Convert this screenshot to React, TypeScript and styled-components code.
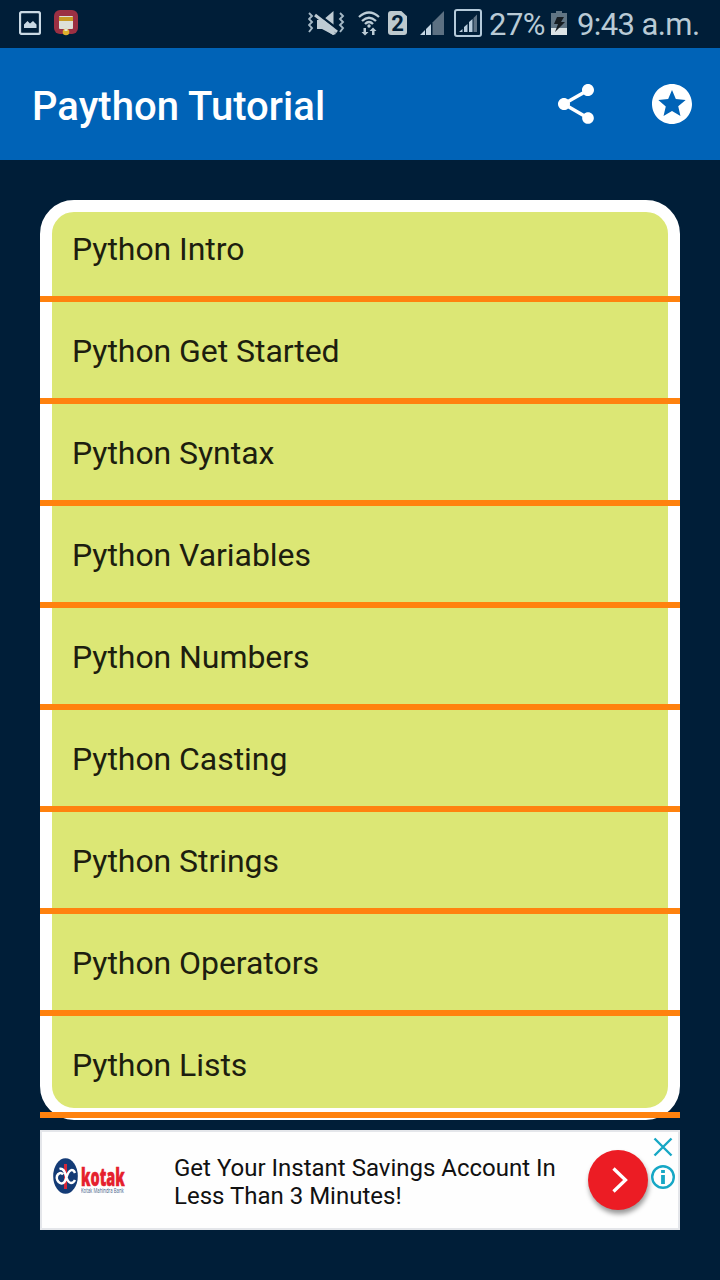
import styled, { createGlobalStyle } from "styled-components";

const lessons = [
    "Python Intro",
    "Python Get Started",
    "Python Syntax",
    "Python Variables",
    "Python Numbers",
    "Python Casting",
    "Python Strings",
    "Python Operators",
    "Python Lists",
];

const App = () => {
    return (
        <>
            <GlobalStyle />
            <ScreenStyled>
                <StatusBar />
                <HeaderStyled>
                    <TitleStyled>Paython Tutorial</TitleStyled>
                    <IconButtonStyled aria-label="Share"><ShareIcon /></IconButtonStyled>
                    <IconButtonStyled aria-label="Rate"><StarsIcon /></IconButtonStyled>
                </HeaderStyled>
                <CardStyled>
                    <LessonListStyled>
                        {lessons.map((lesson) => <LessonStyled key={lesson}>{lesson}</LessonStyled>)}
                    </LessonListStyled>
                </CardStyled>
                <AdBanner />
            </ScreenStyled>
        </>
    )
}

const StatusBar = () => (
    <StatusBarStyled>
        <StatusIcon $width={22} $height={24} $left={19} viewBox="0 0 22 24">
            <rect x="1" y="1" width="20" height="22" rx="2" fill="none" stroke="#c9d9e4" strokeWidth="2.300" />
            <path d="M5 17v-3.500L8.500 10l2.500 2.500 3-2.500 3.500 3.500V17z" fill="#c9d9e4" />
        </StatusIcon>
        <StatusIcon $width={24} $height={26} $left={13} viewBox="0 0 24 26">
            <rect width="24" height="24" rx="6" fill="#9b3043" />
            <rect x="5" y="6" width="14" height="13" rx="1" fill="#dde0d8" />
            <path d="M5 7h14v4H5z" fill="#c79a25" />
            <circle cx="12" cy="22" r="3.300" fill="#dfb12d" />
            <path d="M10.500 19h3v2h-3z" fill="#e7e4d0" />
        </StatusIcon>
        <StatusIcon $width={37} $height={25} $left={230} viewBox="0 0 37 25">
            <path d="M9 9h6l10.500-9v24L14 18H9z" fill="#becbd3" />
            <path d="M8 1.500L30 18.500" stroke="#001e38" strokeWidth="2.500" />
            <path d="M7 4L29 21" stroke="#becbd3" strokeWidth="3" />
            <path d="M16 15h6l6 8-3 1-9-6z" fill="#becbd3" />
            <path d="M1 2l3 3-3 3 3 3-3 3 3 3-3 4M32 2l3 3-3 3 3 3-3 3 3 3-3 4" fill="none" stroke="#a4b8c5" strokeWidth="1.900" />
        </StatusIcon>
        <StatusIcon $width={22} $height={25} $left={13} viewBox="0 0 22 25">
            <path d="M1 6Q11-3 21 6M4 10Q11 3.500 18 10M7 13Q11 9 15 13" fill="none" stroke="#bcccd6" strokeWidth="2.300" />
            <circle cx="11" cy="15" r="1.700" fill="#bcccd6" />
            <path d="M5.500 17h2.500v4h2.500L7 24.500 3.500 21h2zM14 24h2.500v-4h2L15 16.500 11.500 20H14z" fill="#bcccd6" />
        </StatusIcon>
        <SimStyled>2</SimStyled>
        <StatusIcon $width={24} $height={24} $left={13} viewBox="0 0 24 24">
            <path d="M0 24l5-5v5zM6 18l5-5v11H6z" fill="#c3d5e3" />
            <path d="M12.500 11.500L24 0v24H12.500z" fill="#5c7082" />
        </StatusIcon>
        <StatusIcon $width={28} $height={28} $left={10} viewBox="0 0 28 28">
            <rect x="1" y="1" width="26" height="26" rx="2" fill="none" stroke="#b4cada" strokeWidth="2" />
            <path d="M5 23l3.500-3v3zM10 18l3.500-3v8H10zM15 13l3.500-3v13H15z" fill="#b9cddd" />
            <path d="M19.500 9L23 5.500V23h-3.500z" fill="#607486" />
        </StatusIcon>
        <BatteryTextStyled>27%</BatteryTextStyled>
        <StatusIcon $width={16} $height={24} $left={6} viewBox="0 0 16 24">
            <path d="M5 0h6v2h5v22H0V2h5z" fill="#617584" />
            <path d="M0 17h16v7H0z" fill="#dce3e6" />
            <path d="M6 6h7l-3 5h4L4 21l3-8H3z" fill="#171d22" />
        </StatusIcon>
        <ClockStyled>9:43 a.m.</ClockStyled>
    </StatusBarStyled>
)

const ShareIcon = () => (
    <svg width="48" height="48" viewBox="0 0 24 24" fill="#fff">
        <path d="M18 16.080c-.76 0-1.440.3-1.960.770L8.910 12.700c.05-.23.090-.46.090-.7s-.04-.47-.090-.7l7.050-4.110c.54.5 1.250.810 2.040.810 1.660 0 3-1.340 3-3s-1.340-3-3-3-3 1.340-3 3c0 .24.040.47.090.7L8.040 9.810C7.500 9.310 6.790 9 6 9c-1.660 0-3 1.340-3 3s1.340 3 3 3c.79 0 1.500-.31 2.040-.81l7.120 4.160c-.05.21-.08.43-.08.650 0 1.610 1.310 2.920 2.920 2.920s2.920-1.310 2.920-2.920-1.310-2.920-2.920-2.920z" />
    </svg>
)

const StarsIcon = () => (
    <svg width="48" height="48" viewBox="0 0 24 24" fill="#fff">
        <path d="M11.990 2C6.470 2 2 6.480 2 12s4.470 10 9.990 10C17.520 22 22 17.520 22 12S17.520 2 11.990 2zm4.240 16L12 15.450 7.770 18l1.120-4.810-3.730-3.230 4.920-.42L12 5l1.920 4.530 4.920.42-3.730 3.230L16.230 18z" />
    </svg>
)

const AdBanner = () => (
    <AdStyled>
        <BrandStyled>
            <svg width="25" height="36" viewBox="0 0 25 36">
                <ellipse cx="12.500" cy="18" rx="12.300" ry="17.800" fill="#143b76" />
                <path d="M11 6h3v25h-3z" fill="#d62739" />
                <path d="M6.500 11c3.500-1 5 2 6 5.500s2.500 8.500 5.500 8.500c2 0 3-1 4-3M22 15c-1-2.500-2.500-3.500-4.500-2.500-3 1.500-3.500 6-5 9.500s-3.500 4-5.500 3-4-4-3-7 4-4 6-1.500" fill="none" stroke="#fff" strokeWidth="2.500" />
            </svg>
            <BrandNameStyled>
                <strong>kotak</strong>
                <small>Kotak Mahindra Bank</small>
            </BrandNameStyled>
        </BrandStyled>
        <AdTextStyled>Get Your Instant Savings Account In<br />Less Than 3 Minutes!</AdTextStyled>
        <AdButtonStyled aria-label="Open">
            <svg width="60" height="60" viewBox="0 0 60 60" fill="none" stroke="#fff" strokeWidth="3.300">
                <path d="M25.500 18.500L37.500 30 25.500 41.500" />
            </svg>
        </AdButtonStyled>
        <AdControlsStyled>
            <svg width="24" height="54" viewBox="0 0 24 54" fill="none" stroke="#16a7c5" strokeWidth="2.400">
                <path d="M3.500 2.500l17 17M20.500 2.500l-17 17" />
                <circle cx="12" cy="41" r="10.800" />
                <path d="M12 39v9M12 34v3" strokeWidth="3.800" />
            </svg>
        </AdControlsStyled>
    </AdStyled>
)

const GlobalStyle = createGlobalStyle`
    * {
        box-sizing: border-box;
    }

    body {
        margin: 0;
        background: #001e38;
        font-family: Roboto, "Liberation Sans", sans-serif;
    }
`

const ScreenStyled = styled.div`
    width: 720px;
    height: 1280px;
    overflow: hidden;
    background: #001e38;
`

const StatusBarStyled = styled.div`
    height: 48px;
    display: flex;
    align-items: center;
    white-space: nowrap;
    color: #b9cad5;
`

const StatusIcon = styled.svg<{ $width: number, $height: number, $left: number }>`
    flex: none;
    width: ${({ $width }) => $width}px;
    height: ${({ $height }) => $height}px;
    margin-left: ${({ $left }) => $left}px;
    margin-top: -2px;
`

const SimStyled = styled.span`
    flex: none;
    width: 19px;
    height: 24px;
    margin: -2px 0 0 8px;
    background: #bdc9ce;
    border-radius: 3px;
    clip-path: polygon(0 0, 70% 0, 100% 22%, 100% 100%, 0 100%);
    color: #001e38;
    font-size: 22px;
    font-weight: 700;
    line-height: 25px;
    text-align: center;
`

const BatteryTextStyled = styled.span`
    width: 56px;
    margin-left: 7px;
    font-size: 31px;
    letter-spacing: -0.5px;
`

const ClockStyled = styled.span`
    margin-left: 10px;
    font-size: 31px;
    letter-spacing: -0.6px;
`

const HeaderStyled = styled.header`
    height: 112px;
    display: flex;
    align-items: center;
    padding: 0 24px 0 32px;
    background: #0063b7;
`

const TitleStyled = styled.h1`
    flex: 1;
    margin: 6px 0 0;
    color: #fff;
    font-size: 40px;
    font-weight: 500;
    letter-spacing: 0.05px;
    line-height: 48px;
`

const IconButtonStyled = styled.button`
    width: 48px;
    height: 48px;
    padding: 0;
    border: 0;
    background: none;

    & + & {
        margin-left: 48px;
    }

    svg {
        display: block;
    }
`

const CardStyled = styled.main`
    width: 640px;
    height: 920px;
    margin: 40px auto 0;
    border: 12px solid #fff;
    border-radius: 34px;
    background: #dce775;
`

/* pulled over the border so the separators span the full card */
const LessonListStyled = styled.ul`
    margin: -12px;
    padding: 0;
    list-style: none;
`

const LessonStyled = styled.li`
    height: 102px;
    padding-left: 32px;
    border-bottom: 6px solid #ff820e;
    color: #1d1e0f;
    font-size: 32px;
    letter-spacing: -0.06px;
    line-height: 99px;
`

const AdStyled = styled.aside`
    width: 640px;
    height: 100px;
    display: flex;
    margin: 10px auto 0;
    border: 2px solid #e4e6ea;
    background: #fefefe;
`

const BrandStyled = styled.div`
    width: 132px;
    display: flex;
    padding: 26px 0 0 11px;
`

const BrandNameStyled = styled.div`
    width: 43px;
    margin: 7px 0 0 3px;
    font-family: "Open Sans", sans-serif;

    strong {
        display: block;
        color: #e5202d;
        font-size: 24px;
        font-weight: 800;
        line-height: 23px;
        transform: scaleX(0.6);
        transform-origin: left;
        -webkit-text-stroke: 0.5px #e5202d;
    }

    small {
        display: block;
        color: #405b87;
        font-size: 7px;
        line-height: 6px;
        white-space: nowrap;
        transform: scaleX(0.61);
        transform-origin: left;
    }
`

const AdTextStyled = styled.p`
    width: 414px;
    margin: 22px 0 0;
    color: #111;
    font-size: 24px;
    line-height: 28px;
    white-space: nowrap;
`

const AdButtonStyled = styled.button`
    flex: none;
    width: 60px;
    height: 60px;
    margin-top: 18px;
    padding: 0;
    border: 0;
    border-radius: 50%;
    background: #ec1c24;
    box-shadow: 1px 4px 5px rgba(0, 0, 0, 0.4);
`

const AdControlsStyled = styled.div`
    margin: 4px 0 0 3px;
`

export default App
